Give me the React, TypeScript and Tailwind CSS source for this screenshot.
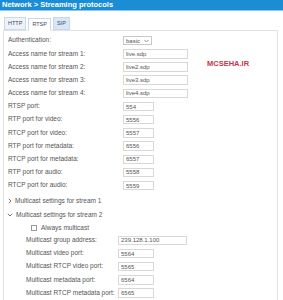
import React from "react";

const Row = ({
  label,
  children,
  lw = "w-[119px] pl-[4px]",
  h = "h-[13.2px]",
}: {
  label: string;
  children?: React.ReactNode;
  lw?: string;
  h?: string;
}) => (
  <div className={`flex items-center ${h}`}>
    <div className={`${lw} shrink-0 text-[6.5px] text-[#555] leading-none`}>{label}</div>
    {children}
  </div>
);

const Input = ({ value, w }: { value: string; w: string }) => (
  <div
    className={`${w} h-[9.5px] border border-[#d8d8d8] bg-white flex items-center pl-[2px] text-[6px] text-[#555] leading-none`}
  >
    {value}
  </div>
);

export default function App() {
  return (
    <div className="w-[283px] h-[300px] overflow-hidden bg-white relative font-['Liberation_Sans',Arial,sans-serif]">
      <div className="h-[10px] bg-[#1b8dd5] flex items-center pl-[2px]">
        <span className="text-white font-bold text-[7.5px] leading-none">Network &gt; Streaming protocols</span>
      </div>
      <div className="h-px bg-[#8ec8ee]" />
      <div className="flex gap-[2px] pl-[4px] mt-[6px] h-[13px] items-end">
        <div className="h-[13px] px-[3px] border border-[#c9d9e7] bg-[#eef3f8] flex items-center text-[5.5px] text-[#446] leading-none">
          HTTP
        </div>
        <div className="h-[13px] px-[3px] border border-[#c9d9e7] border-b-white bg-white flex items-center text-[5.5px] text-[#446] leading-none relative z-10 -mb-px">
          RTSP
        </div>
        <div className="h-[13px] px-[3px] border border-[#c9d9e7] bg-[#d6e8f6] flex items-center text-[5.5px] text-[#446] leading-none">
          SIP
        </div>
      </div>
      <div className="mx-[3px] w-[275px] h-[300px] border border-[#e2e2e2] pt-[3px]">
        <Row label="Authentication:">
          <div className="w-[29px] h-[9px] border border-[#c8c8c8] bg-white flex items-center justify-between pl-[2px] pr-[2px] text-[6px] text-[#555] leading-none">
            basic
            <svg width="5" height="4" viewBox="0 0 5 4">
              <path d="M0.5 1 L2.5 3 L4.5 1" fill="none" stroke="#777" strokeWidth="0.8" />
            </svg>
          </div>
        </Row>
        <Row label="Access name for stream 1:">
          <Input value="live.sdp" w="w-[65px]" />
        </Row>
        <Row label="Access name for stream 2:">
          <Input value="live2.sdp" w="w-[65px]" />
        </Row>
        <Row label="Access name for stream 3:">
          <Input value="live3.sdp" w="w-[65px]" />
        </Row>
        <Row label="Access name for stream 4:">
          <Input value="live4.sdp" w="w-[65px]" />
        </Row>
        <Row label="RTSP port:">
          <Input value="554" w="w-[31px]" />
        </Row>
        <Row label="RTP port for video:">
          <Input value="5556" w="w-[31px]" />
        </Row>
        <Row label="RTCP port for video:">
          <Input value="5557" w="w-[31px]" />
        </Row>
        <Row label="RTP port for metadata:">
          <Input value="6556" w="w-[31px]" />
        </Row>
        <Row label="RTCP port for metadata:">
          <Input value="6557" w="w-[31px]" />
        </Row>
        <Row label="RTP port for audio:">
          <Input value="5558" w="w-[31px]" />
        </Row>
        <Row label="RTCP port for audio:">
          <Input value="5559" w="w-[31px]" />
        </Row>
        <div className="flex items-center h-[14px] mt-[1.5px] pl-[4px] text-[6.5px] text-[#555] leading-none">
          <svg width="4" height="6" viewBox="0 0 4 6" className="mr-[3px]">
            <path d="M0.8 0.8 L3 3 L0.8 5.2" fill="none" stroke="#555" strokeWidth="0.8" />
          </svg>
          Multicast settings for stream 1
        </div>
        <div className="flex items-center h-[14px] pl-[3px] text-[6.5px] text-[#555] leading-none">
          <svg width="6" height="4" viewBox="0 0 6 4" className="mr-[3px]">
            <path d="M0.8 0.8 L3 3 L5.2 0.8" fill="none" stroke="#555" strokeWidth="0.8" />
          </svg>
          Multicast settings for stream 2
        </div>
        <div className="flex items-center h-[12px] pl-[27px] text-[6.5px] text-[#555] leading-none">
          <div className="w-[6px] h-[6px] border border-[#999] bg-white mr-[4px]" />
          Always multicast
        </div>
        <Row label="Multicast group address:" lw="w-[114px] pl-[22px]">
          <Input value="239.128.1.100" w="w-[69px]" />
        </Row>
        <Row label="Multicast video port:" lw="w-[114px] pl-[22px]">
          <Input value="5564" w="w-[36px]" />
        </Row>
        <Row label="Multicast RTCP video port:" lw="w-[114px] pl-[22px]">
          <Input value="5565" w="w-[36px]" />
        </Row>
        <Row label="Multicast metadata port:" lw="w-[114px] pl-[22px]">
          <Input value="6564" w="w-[36px]" />
        </Row>
        <Row label="Multicast RTCP metadata port:" lw="w-[114px] pl-[22px]">
          <Input value="6565" w="w-[36px]" />
        </Row>
      </div>
      <div className="absolute left-[207px] top-[60px] text-[7.5px] font-bold text-[#c8344a] leading-none">
        MCSEHA.IR
      </div>
    </div>
  );
}
